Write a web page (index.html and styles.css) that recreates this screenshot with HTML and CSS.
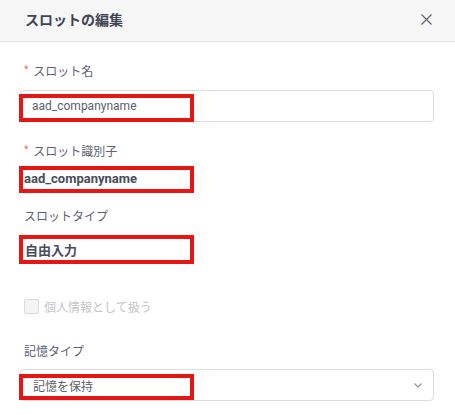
FILE: index.html
```html
<!DOCTYPE html>
<html lang="ja">

<head>
    <meta charset="UTF-8">
    <meta name="viewport" content="width=device-width, initial-scale=1.0">
    <title>スロットの編集</title>
    <link rel="stylesheet" href="styles.css">
</head>

<body>
    <div class="modal">
        <div class="modal-header">
            <h2 class="modal-title">スロットの編集</h2>
            <button class="close-btn" aria-label="close">
                <svg width="11" height="11" viewBox="0 0 11 11">
                    <path d="M0.5 0.5 L10.5 10.5 M10.5 0.5 L0.5 10.5" stroke="#5d6270" stroke-width="1.2" fill="none"/>
                </svg>
            </button>
        </div>

        <div class="modal-body">
            <div class="field field-name">
                <label class="field-label"><span class="req">*</span>スロット名</label>
                <div class="control">
                    <input type="text" class="text-input" value="aad_companyname">
                    <span class="mark mark-name"></span>
                </div>
            </div>

            <div class="field field-id">
                <label class="field-label"><span class="req">*</span>スロット識別子</label>
                <div class="value value-id">aad_companyname</div>
            </div>

            <div class="field field-type">
                <label class="field-label">スロットタイプ</label>
                <div class="value value-type">自由入力</div>
            </div>

            <label class="check-row">
                <span class="check-box"></span>
                <span class="check-text">個人情報として扱う</span>
            </label>

            <div class="field field-memory">
                <label class="field-label">記憶タイプ</label>
                <div class="control">
                    <div class="select">
                        <span>記憶を保持</span>
                        <svg width="8" height="5" viewBox="0 0 8 5">
                            <path d="M0.5 0.5 L4 4 L7.5 0.5" stroke="#8a8f99" stroke-width="1.1" fill="none"/>
                        </svg>
                    </div>
                    <span class="mark mark-memory"></span>
                </div>
            </div>
        </div>
    </div>
</body>

</html>
```

FILE: styles.css
```css
body {
    margin: 0;
    background: #fff;
    font-family: Roboto, "Noto Sans CJK JP", sans-serif;
    color: #5c6170;
}

.modal-header {
    height: 41px;
    border-bottom: 1px solid #e2e2e4;
    background-color: #f6f6f7;
    display: flex;
    align-items: center;
    justify-content: space-between;
    padding: 0 23px 0 25px;
}

.modal-title {
    margin: 0 0 4px 0;
    font-size: 14px;
    font-weight: bold;
    color: #3e4454;
}

.close-btn {
    border: none;
    background: none;
    padding: 0;
    margin-bottom: 3px;
    display: flex;
    cursor: pointer;
}

.modal-body {
    padding: 20px 21px 0 20px;
}

.field-label {
    display: block;
    height: 20px;
    padding-left: 4px;
    font-size: 12px;
    line-height: 20px;
    color: #5c6170;
}

.req {
    position: relative;
    top: -3px;
    color: #f26a4b;
    font-size: 10px;
    line-height: 1;
    margin-right: 5px;
}

.control {
    position: relative;
    margin-top: 8px;
}

.text-input {
    display: block;
    width: 100%;
    height: 32px;
    box-sizing: border-box;
    border: 1px solid #dcdcdf;
    border-radius: 4px;
    padding: 0 11px;
    font-family: inherit;
    font-size: 12px;
    color: #5a5f6d;
    outline: none;
}

.mark {
    position: absolute;
    left: -1px;
    width: 175px;
    box-sizing: border-box;
    border: 4px solid #e81515;
    pointer-events: none;
}

.mark-name {
    top: 4px;
    height: 28px;
}

.mark-memory {
    top: 5px;
    height: 26px;
}

.field-id {
    margin-top: 20px;
}

.value {
    width: 175px;
    margin-left: -1px;
    box-sizing: border-box;
    border: 4px solid #e81515;
    padding-left: 1px;
    font-weight: bold;
    font-size: 13px;
    color: #474c5b;
    display: flex;
    align-items: center;
}

.value-id {
    margin-top: 4px;
    height: 27px;
    padding-bottom: 2px;
}

.field-type {
    margin-top: 14px;
}

.value-type {
    margin-top: 8px;
    height: 29px;
    padding-left: 2px;
}

.check-row {
    display: flex;
    align-items: center;
    height: 20px;
    margin-top: 32px;
    padding-left: 4px;
}

.check-box {
    width: 15px;
    height: 15px;
    box-sizing: border-box;
    border: 1px solid #dadada;
    border-radius: 2px;
    background-color: #f4f4f4;
    margin-right: 5px;
}

.check-text {
    font-size: 12px;
    color: #c4c5c9;
}

.field-memory {
    margin-top: 26px;
}

.field-memory .control {
    margin-top: 7px;
}

.select {
    height: 32px;
    box-sizing: border-box;
    border: 1px solid #dcdcdf;
    border-radius: 4px;
    padding: 0 11px 0 12px;
    display: flex;
    align-items: center;
    justify-content: space-between;
    font-size: 12px;
    color: #5a5f6d;
}
```
